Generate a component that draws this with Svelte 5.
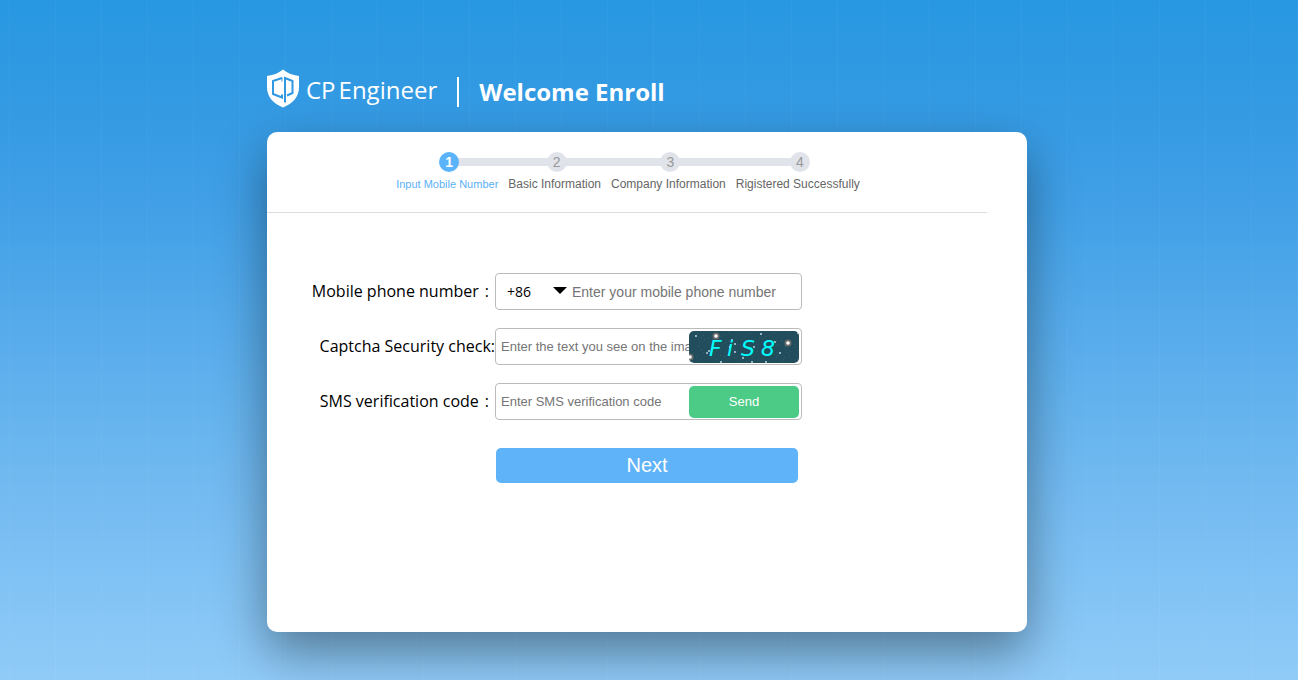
<script>
  const steps = [
    { label: 'Input Mobile Number', active: true },
    { label: 'Basic Information' },
    { label: 'Company Information' },
    { label: 'Rigistered Successfully' }
  ];
  const stars = Array.from({ length: 150 }, (_, i) => ({
    x: (i * 47 + ((i * i) % 13)) % 110,
    y: (i * 19 + ((i * i) % 7)) % 32,
    light: i % 3 === 0
  }));
  const sparks = [[7, 5], [18, 22], [20, 20], [41, 16], [43, 9], [46, 13], [46, 21], [54, 27], [65, 16], [72, 3], [86, 11], [91, 22], [32, 31], [77, 31], [63, 31], [109, 2]];
  const glows = [[27, 5], [99, 12], [1, 26]];
  let country = $state('+86');
  let phone = $state('');
  let captcha = $state('');
  let code = $state('');
</script>

<div class="page">
  <main>
    <header>
      <svg class="shield" viewBox="0 0 32 38" aria-hidden="true">
        <path fill="#fff" d="M16 0C12 3.500 7 5.500 0 6.500V18c0 9 6 16 16 20 10-4 16-11 16-20V6.500C25 5.500 20 3.500 16 0Z" />
        <path fill="none" stroke="#3099e2" stroke-width="2" d="M15 8.500 6 11.500v13l9 3.500v-3M18 33V8.500l7.500 3v12L20 26" />
        <path fill="none" stroke="#3099e2" stroke-width="1" d="M15 8v4" />
      </svg>
      <span class="brand"><span>CP</span><span>Engineer</span></span>
      <h1>Welcome Enroll</h1>
    </header>

    <section class="card">
      <div class="progress">
        <ol>
          {#each steps as step, i}
            <li class:active={step.active}>
              <span class="dot">{i + 1}</span>
              <span class="caption">{step.label}</span>
            </li>
          {/each}
        </ol>
      </div>

      <form onsubmit={(e) => e.preventDefault()}>
        <label for="phone">Mobile phone number<span class="colon">:</span></label>
        <div class="field phone">
          <select aria-label="Country code" bind:value={country}>
            <option>+86</option>
            <option>+852</option>
            <option>+1</option>
          </select>
          <svg class="caret" viewBox="0 0 14 7" aria-hidden="true"><path d="M0 0h14L7 7Z" /></svg>
          <input id="phone" type="tel" placeholder="Enter your mobile phone number" bind:value={phone} />
        </div>

        <label for="captcha">Captcha Security check:</label>
        <div class="field">
          <input id="captcha" type="text" placeholder="Enter the text you see on the image" bind:value={captcha} />
          <svg class="captcha" viewBox="0 0 110 32" role="img" aria-label="Security image">
            <rect width="110" height="32" fill="#214d5c" />
            {#each stars as s}
              <rect x={s.x} y={s.y} width="1" height="1" fill={s.light ? '#36606b' : '#2a5665'} />
            {/each}
            {#each glows as [x, y]}
              <circle cx={x} cy={y} r="3.500" fill="#8a7770" opacity=".7" />
              <circle cx={x} cy={y} r="1.800" fill="#fff" />
            {/each}
            {#each sparks as [x, y]}
              <circle cx={x} cy={y} r=".9" fill="#c5e5f5" />
            {/each}
            <text x="20 38 52 72" y="25">FiS8</text>
          </svg>
        </div>

        <label for="code">SMS verification code<span class="colon">:</span></label>
        <div class="field">
          <input id="code" type="text" placeholder="Enter SMS verification code" bind:value={code} />
          <button class="send" type="button">Send</button>
        </div>

        <button class="next" type="submit">Next</button>
      </form>
    </section>
  </main>
</div>

<style>
  :global(body) { margin: 0; }
  .page {
    box-sizing: border-box;
    min-height: 100vh;
    padding: 68px 4px 48px 0;
    overflow: hidden;
    font-family: "Open Sans", "Noto Sans", sans-serif;
    background:
      repeating-linear-gradient(90deg, transparent 0 9px, rgba(255, 255, 255, .03) 9px 10px, transparent 10px 46px),
      linear-gradient(#2898e2 0, #3099e2 80px, #409fe6 200px, #74bbf1 500px, #90cbf8 680px);
  }
  main {
    max-width: 760px;
    margin: 0 auto;
  }
  header {
    display: flex;
    align-items: center;
    height: 48px;
    margin-bottom: 16px;
    color: #fff;
  }
  .shield {
    width: 32px;
    height: 39px;
    margin-bottom: 7px;
  }
  .brand {
    display: flex;
    gap: 3px;
    margin: 0 20px 4px 7px;
    font-size: 24px;
    line-height: 32px;
  }
  h1 {
    margin: 0;
    padding-left: 20px;
    border-left: 2px solid #fff;
    font-size: 24px;
    line-height: 30px;
  }
  .card {
    min-height: 500px;
    border-radius: 10px;
    background: #fff;
    box-shadow: 0 20px 50px rgba(0, 0, 0, .4);
  }
  .progress {
    display: flex;
    justify-content: center;
    margin-right: 40px;
    padding: 20px 0;
    border-bottom: 1px solid #ddd;
  }
  ol {
    position: relative;
    display: flex;
    gap: 10px;
    margin: 0;
    padding: 0 0 0 2px;
    list-style: none;
    font-family: "Liberation Sans", Arial, sans-serif;
  }
  ol::before {
    content: "";
    position: absolute;
    top: 6px;
    left: 52px;
    right: 58px;
    height: 8px;
    background: #e0e3ea;
  }
  li {
    position: relative;
    display: flex;
    flex-direction: column;
    align-items: center;
    gap: 4px;
  }
  .dot {
    width: 20px;
    margin-left: 4px;
    border-radius: 50%;
    background: #e0e3ea;
    color: #999;
    font-size: 14px;
    line-height: 20px;
    text-align: center;
  }
  .caption {
    color: #666;
    font-size: 12px;
    line-height: 16px;
    white-space: nowrap;
  }
  .active .dot {
    background: #5bb3fa;
    color: #fff;
    font-weight: bold;
  }
  .active .caption {
    color: #5bb0f5;
    font-size: 11px;
  }
  form {
    display: grid;
    grid-template-columns: 228px 307px;
    row-gap: 18px;
    padding-top: 60px;
  }
  label {
    color: #000;
    font-size: 16px;
    line-height: 36px;
    text-align: right;
    white-space: nowrap;
  }
  .colon { padding: 0 6px; }
  .field {
    box-sizing: border-box;
    display: flex;
    align-items: center;
    height: 37px;
    padding: 0 2px 0 5px;
    border: 1px solid #bbb;
    border-radius: 4px;
  }
  input {
    flex: 1;
    min-width: 0;
    height: 33px;
    padding: 0;
    border: 0;
    outline: 0;
    background: none;
    font: 13px "Liberation Sans", Arial, sans-serif;
  }
  input::placeholder { color: #757575; }
  .phone input { font-size: 14px; }
  select {
    width: 46px;
    padding: 0 0 0 6px;
    border: 0;
    outline: 0;
    appearance: none;
    background: none;
    color: #000;
    font: 14px/20px "Open Sans", sans-serif;
  }
  .caret {
    width: 14px;
    height: 7px;
    margin: 0 5px 2px 6px;
  }
  .captcha, .send {
    flex: none;
    width: 110px;
    height: 32px;
    border-radius: 5px;
  }
  .captcha text {
    fill: #0ff;
    font: italic 22px "DejaVu Sans", sans-serif;
  }
  button {
    border: 0;
    color: #fff;
    font-family: "Liberation Sans", Arial, sans-serif;
    cursor: pointer;
  }
  .send {
    background: #4bcb86;
    font-size: 13px;
  }
  .next {
    grid-column: 2;
    height: 35px;
    margin: 10px 4px 0 1px;
    border-radius: 5px;
    background: #5fb4f9;
    font-size: 20px;
  }
</style>
